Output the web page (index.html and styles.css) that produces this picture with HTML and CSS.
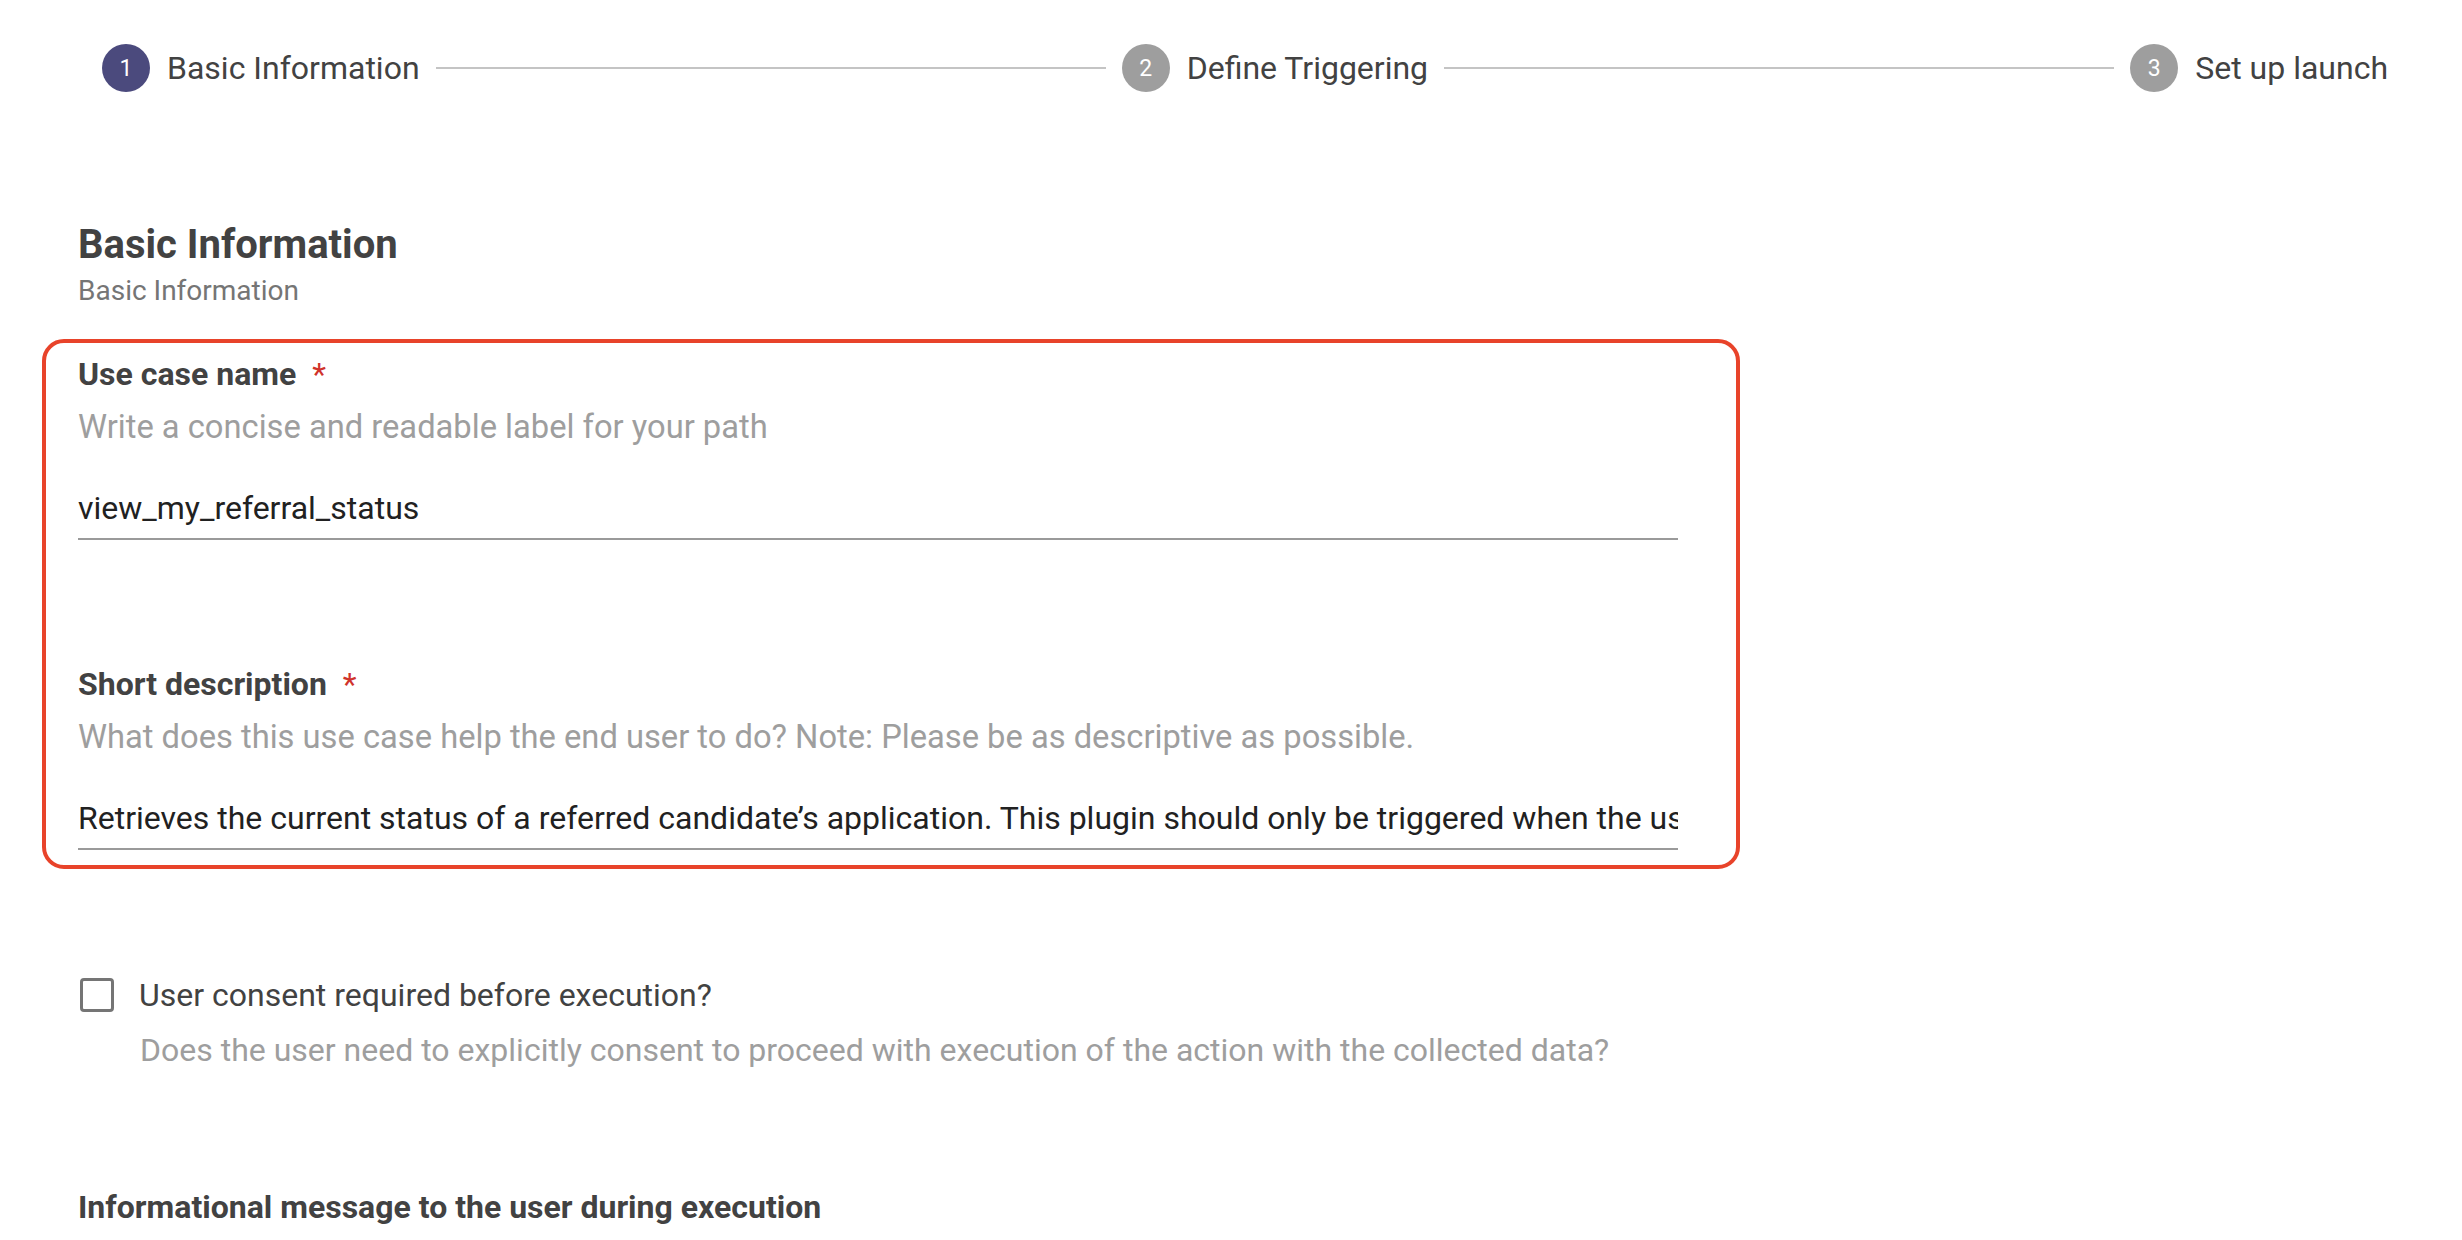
FILE: index.html
```html
<!DOCTYPE html>
<html lang="en">
<head>
<meta charset="utf-8">
<title>Basic Information</title>
<link rel="stylesheet" href="styles.css">
</head>
<body>
<div class="stepper">
  <div class="step">
    <span class="step-num active">1</span>
    <span class="step-label">Basic Information</span>
  </div>
  <div class="step-line"></div>
  <div class="step">
    <span class="step-num">2</span>
    <span class="step-label">Define Triggering</span>
  </div>
  <div class="step-line"></div>
  <div class="step">
    <span class="step-num">3</span>
    <span class="step-label">Set up launch</span>
  </div>
</div>

<main class="content">
  <h1 class="title">Basic Information</h1>
  <p class="subtitle">Basic Information</p>

  <section class="highlight">
    <div class="field">
      <div class="label">Use case name<span class="req">*</span></div>
      <div class="hint">Write a concise and readable label for your path</div>
      <div class="input"><span class="value">view_my_referral_status</span></div>
    </div>
    <div class="field field-second">
      <div class="label">Short description<span class="req">*</span></div>
      <div class="hint">What does this use case help the end user to do? Note: Please be as descriptive as possible.</div>
      <div class="input"><span class="value">Retrieves the current status of a referred candidate’s application. This plugin should only be triggered when the user asks about the status of a candidate they referred.</span></div>
    </div>
  </section>

  <div class="consent">
    <div class="consent-row">
      <span class="checkbox"></span>
      <span class="consent-label">User consent required before execution?</span>
    </div>
    <div class="consent-hint">Does the user need to explicitly consent to proceed with execution of the action with the collected data?</div>
  </div>

  <div class="label info-label">Informational message to the user during execution</div>
</main>
</body>
</html>
```

FILE: styles.css
```css
* { box-sizing: border-box; }

html, body {
  margin: 0;
  padding: 0;
  background: #ffffff;
}

body {
  font-family: Roboto, "Liberation Sans", Arial, sans-serif;
  color: #424242;
  width: 2462px;
  height: 1240px;
  overflow: hidden;
}

/* ---------- stepper ---------- */
.stepper {
  display: flex;
  align-items: center;
  gap: 16px;
  padding: 44px 74px 0 102px;
}

.step {
  display: flex;
  align-items: center;
  gap: 17px;
}

.step-num {
  width: 48px;
  height: 48px;
  border-radius: 50%;
  background: #9e9e9e;
  color: #ffffff;
  font-size: 23px;
  display: flex;
  align-items: center;
  justify-content: center;
  line-height: 1;
}

.step-num.active {
  background: #4b4a7d;
}

.step-label {
  font-size: 32px;
  line-height: 48px;
  color: #424242;
  white-space: nowrap;
}

.step-line {
  flex: 1;
  height: 2px;
  background: #c4c4c4;
}

/* ---------- content ---------- */
.content {
  padding-left: 78px;
}

.title {
  margin: 129px 0 0;
  font-size: 40px;
  line-height: 48px;
  font-weight: 700;
  color: #424242;
}

.subtitle {
  margin: 6px 0 0;
  font-size: 28px;
  line-height: 32px;
  color: #757575;
}

.highlight {
  margin: 32px 0 0 -36px;
  width: 1698px;
  border: 4px solid #e8432a;
  border-radius: 22px;
  padding: 11px 32px 15px 32px;
}

.field-second {
  margin-top: 124px;
}

.label {
  font-size: 32px;
  line-height: 40px;
  font-weight: 700;
  color: #424242;
}

.req {
  color: #d0332b;
  font-weight: 400;
  margin-left: 16px;
}

.hint {
  margin-top: 13px;
  font-size: 32.7px;
  line-height: 40px;
  color: #9e9e9e;
  white-space: nowrap;
}

.input {
  margin-top: 41px;
  width: 1600px;
  padding-bottom: 10px;
  border-bottom: 2px solid #9a9a9a;
  overflow: hidden;
}

.value {
  display: block;
  font-size: 32px;
  line-height: 40px;
  color: #212121;
  white-space: nowrap;
  overflow: hidden;
}

/* ---------- consent ---------- */
.consent {
  margin-top: 106px;
}

.consent-row {
  display: flex;
  align-items: center;
  gap: 25px;
}

.checkbox {
  width: 34px;
  height: 34px;
  margin-left: 2px;
  border: 3px solid #757575;
  border-radius: 4px;
  flex: none;
}

.consent-label {
  font-size: 32px;
  line-height: 40px;
  color: #424242;
}

.consent-hint {
  margin-top: 15px;
  padding-left: 62px;
  font-size: 32px;
  line-height: 40px;
  color: #9e9e9e;
  white-space: nowrap;
}

.info-label {
  margin-top: 117px;
}
```
